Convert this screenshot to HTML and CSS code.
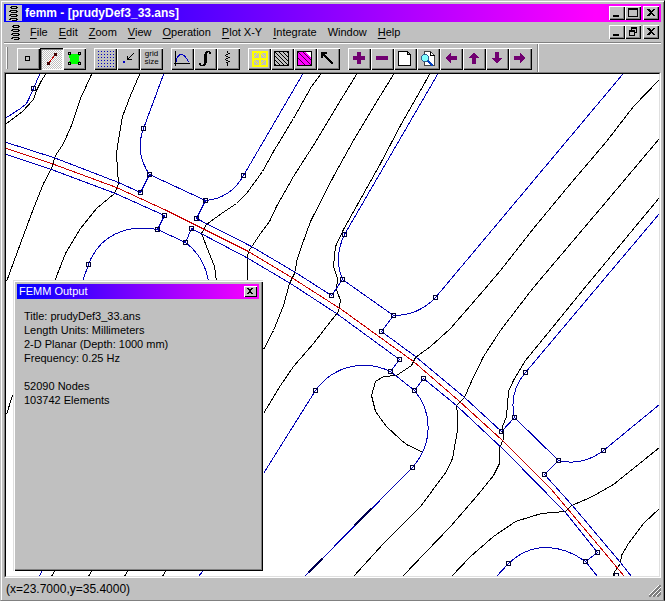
FILE: index.html
```html
<!DOCTYPE html>
<html lang="en">
<head>
    <meta charset="utf-8">
    <title>femm - [prudyDef3_33.ans]</title>
    <link rel="stylesheet" href="styles.css">
</head>

<body>
<svg class="defs" aria-hidden="true">
    <defs>
        <symbol id="coil" viewBox="0 0 12 16">
            <path d="M3 1h6v1H3zM2 2h2v1H2zM8 2h2v1H8zM3 3h6v1H3zM2 5h7v1H2zM1 6h2v1H1zM8 6h2v1H8zM3 7h6v1H3zM2 9h7v1H2zM1 10h2v1H1zM8 10h2v1H8zM3 11h6v1H3zM2 13h7v1H2zM1 14h2v1H1zM8 14h2v1H8zM4 15h5v1H4z"/>
        </symbol>
        <symbol id="min" viewBox="0 0 12 10"><path d="M2 7h6v2H2z"/></symbol>
        <symbol id="max" viewBox="0 0 12 10"><path d="M1 0h10v9H1zM2 2v6h8V2z" fill-rule="evenodd"/></symbol>
        <symbol id="restore" viewBox="0 0 12 10"><path d="M4 0h6v6H8v3H2V3h2zM5 2v1h3v2h1V2zM3 5v3h4V5z" fill-rule="evenodd"/></symbol>
        <symbol id="close" viewBox="0 0 12 10"><path d="M2 1h2l2 2 2-2h2L7 4.500l3 3.500H8L6 6 4 8H2l3-3.500z"/></symbol>
        <g id="node"><rect x="-2" y="-2" width="4" height="4"/></g>
        <pattern id="hatch" width="4" height="4" patternUnits="userSpaceOnUse">
            <path d="M0 0h1v1H0zM1 1h1v1H1zM2 2h1v1H2zM3 3h1v1H3z" fill="#000"/>
        </pattern>
        <pattern id="dots" x="4" y="3" width="3" height="3" patternUnits="userSpaceOnUse">
            <path d="M0 0h1v1H0z" fill="#0000c0"/>
        </pattern>
    </defs>
</svg>

<div class="window">
    <div class="titlebar">
        <span class="appIcon"><svg><use href="#coil"/></svg></span>
        <h1>femm - [prudyDef3_33.ans]</h1>
        <div class="winButtons">
            <button aria-label="Minimize"><svg><use href="#min"/></svg></button>
            <button aria-label="Maximize"><svg><use href="#max"/></svg></button>
            <button class="closeButton" aria-label="Close"><svg><use href="#close"/></svg></button>
        </div>
    </div>

    <div class="menubar">
        <svg class="docIcon"><use href="#coil"/></svg>
        <nav class="menu">
            <button><u>F</u>ile</button>
            <button><u>E</u>dit</button>
            <button><u>Z</u>oom</button>
            <button><u>V</u>iew</button>
            <button><u>O</u>peration</button>
            <button><u>P</u>lot X-Y</button>
            <button><u>I</u>ntegrate</button>
            <button>Window</button>
            <button><u>H</u>elp</button>
        </nav>
        <div class="winButtons">
            <button aria-label="Minimize document"><svg><use href="#min"/></svg></button>
            <button aria-label="Restore document"><svg><use href="#restore"/></svg></button>
            <button class="closeButton" aria-label="Close document"><svg><use href="#close"/></svg></button>
        </div>
    </div>

    <div class="toolbar">
        <div class="tools">
            <div class="toolGroup">
                <button aria-label="Point"><svg><rect x="8.500" y="8.500" width="4" height="4" fill="none" stroke="#000"/></svg></button>
                <button class="pressed" aria-label="Contour"><svg><path d="M9 15L15 7" stroke="#c00000" fill="none"/><path d="M7 14h3v3H7zM14 5h3v3h-3z" fill="#400000"/></svg></button>
                <button aria-label="Area">
                    <svg><path d="M6 7l2-1h6l3 1-1 3 1 5-3 1H8l-2-1 1-3z" fill="#00ff00"/><path d="M5.500 4.500h2v2h-2zM15.500 4.500h2v2h-2zM5.500 14.500h2v2h-2zM15.500 14.500h2v2h-2z" fill="none" stroke="#000"/></svg>
                </button>
            </div>
            <div class="toolGroup">
                <button aria-label="Show grid"><svg><rect x="4" y="3" width="16" height="16" fill="url(#dots)"/></svg></button>
                <button aria-label="Snap grid"><svg><path d="M16.500 5.500l-6 6M10.500 7.500v4h4" fill="none" stroke="#000"/><path d="M6 13h2v2H6z" fill="#0000c0"/></svg></button>
                <button class="gridSize">grid<br>size</button>
            </div>
            <div class="toolGroup">
                <button aria-label="Plot"><svg><path d="M4.500 3v15M3 15.500h16" fill="none" stroke="#000"/><path d="M5 14c1-6 3-7.500 5.500-7.500S15 9 17.500 14" fill="none" stroke="#0000c0"/></svg></button>
                <button aria-label="Line integral"><svg><path d="M12 3h4v1h1v2h-2V4h-1v1h-1v10h-1v2h-1v1H6v-1H5v-2h2v2h2v-1h1V6h1V4h1z"/></svg></button>
                <button aria-label="Circuit"><svg><path d="M10 3h1v2h-1zM11 5h2v1h-2zM9 6h2v1H9zM8 7h1v1H8zM9 8h2v1H9zM11 9h2v1h-2zM9 10h2v1H9zM8 11h1v1H8zM9 12h2v1H9zM11 13h2v1h-2zM9 14h2v1H9zM10 15h1v3h-1z"/></svg></button>
            </div>
            <div class="toolGroup">
                <button aria-label="Mesh"><svg><path d="M4.500 3.500h14v14h-14zM11.500 3v15M4 10.500h15" fill="none" stroke="#ffff00" stroke-width="2"/><path d="M6 9l4-4M13 5l4 4M6 12l4 4M17 12l-4 4" fill="none" stroke="#ffff00"/></svg></button>
                <button aria-label="Contours"><svg><rect x="3.500" y="3.500" width="14" height="14" fill="url(#hatch)" stroke="#000"/></svg></button>
                <button aria-label="Density"><svg><path d="M3.500 3.500h14v14h-14z" fill="#ff00ff" stroke="#000"/><path d="M12 4h5v6z" fill="#fff"/><path d="M4 4l13 13M9 4l8 8M4 10l7 7" fill="none" stroke="#400040"/></svg></button>
                <button aria-label="Vectors"><svg><path d="M16 16L6 6" stroke="#000" stroke-width="2"/><path d="M4 4h6v2H6v4H4z"/></svg></button>
            </div>
            <div class="toolGroup purple">
                <button aria-label="Zoom in"><svg><path d="M9 4h4v4h4v4h-4v4H9v-4H5V8h4z"/></svg></button>
                <button aria-label="Zoom out"><svg><path d="M5 8h12v4H5z"/></svg></button>
                <button aria-label="Natural size"><svg><path d="M4.500 3.500h9l3 3v11h-12zM13.500 3.500v3h3" fill="#fff" stroke="#000"/></svg></button>
                <button aria-label="Zoom window"><svg><path d="M7.500 3.500h6l4 4v10h-10z" fill="#fff" stroke="#404040"/><path d="M13.500 3.500v4h4" fill="none" stroke="#000"/><circle cx="8" cy="10" r="3.500" fill="#80ffff" stroke="#306090"/><path d="M11 13l5 5" stroke="#0040c0" stroke-width="2"/></svg></button>
                <button aria-label="Pan left"><svg><path d="M5 10l6-5v3h6v4h-6v3z"/></svg></button>
                <button aria-label="Pan up"><svg><path d="M11 4l5 6h-3v6H9v-6H6z"/></svg></button>
                <button aria-label="Pan down"><svg><path d="M11 16l5-6h-3V4H9v6H6z"/></svg></button>
                <button aria-label="Pan right"><svg><path d="M17 10l-6-5v3H5v4h6v3z"/></svg></button>
            </div>
        </div>
    </div>

    <div class="view">
        <svg class="plot" role="img" aria-label="Flux lines">
            <g transform="translate(-5.500 -73.500)">
                <!-- flux lines -->
                <g class="flux">
                    <path d="M45 74L41 80 36 90 33 99 22 111 6 123"/>
                    <path d="M91 74L80 98 71 125 63 143 55 155 51 168 43 183 33 208 20 243 6 281"/>
                    <path d="M139 74L130 95 122 116 119 133 116 153 117 170 118 183 114 193 96 208 80 228 65 253 54 281"/>
                    <path d="M320 74L311 86 293 118 273 151 262 171 246 193 236 203 221 213 206 224 201 233 208 251 214 266 216 281"/>
                    <path d="M356 74L343 95 316 140 293 176 276 206 269 221 260 233 248 251 247 256V281"/>
                    <path d="M393 74L380 95 353 140 333 176 310 221 301 246 296 261 295 271 289 283 283 305 273 330 263 349"/>
                    <path d="M429 74L400 125 380 163 343 229 335 246 333 266 337 278 336 289 340 300 338 311 330 321 313 343 293 366 280 385 263 413"/>
                    <path d="M659 79L633 106 606 141 566 188 533 228 500 270 483 290 450 328 430 346 415 357 411 365 396 375 383 376 375 381 371 395 375 411 386 426 400 439 406 444 423 452"/>
                    <path d="M659 138L600 208 533 287 516 309 500 330 483 356 470 383 464 397 456 405 457 413V430L452 458 446 471 420 506 383 543 353 576"/>
                    <path d="M659 197L582 290 543 338 525 360 513 380 508 391 506 416 502 426 503 438 499 448V463L493 475 476 496 450 526 402 576"/>
                    <path d="M659 447L613 484 590 497 571 505 565 511 541 513 515 521 493 536 470 556 451 576"/>
                    <path d="M659 508L643 523 628 543 621 555 620 563 613 573V576"/>
                    <path d="M12 395L6 414M54 571L51 576M91 571L88 576M127 571L124 576M165 571L162 576"/>
                </g>
                <!-- stator and rotor outlines -->
                <g class="outline">
                    <path d="M39 74L33 88 29 97 26 103 20 108 6 117"/>
                    <path d="M163 74L143 128Q134 152 149 174L140 192 118 182 53 157 6 142"/>
                    <path d="M149 174L205 200Q230 198 243 175L302 74"/>
                    <path d="M205 200L196 218 251 246 295 272 331 295 342 279Q333 257 344 234L437 74"/>
                    <path d="M342 279L393 315Q418 315 435 297L622 74"/>
                    <path d="M393 315L381 331 415 356 464 397 501 431 514 417Q508 392 525 372L594 290 659 213"/>
                    <path d="M514 417L558 460Q582 466 603 450L659 404"/>
                    <path d="M558 460L544 474 571 504 620 562 631 576"/>
                    <path d="M6 154L51 169 115 193 164 215 157 229C123 223 98 237 88 264L82 281"/>
                    <path d="M157 229L185 242Q204 256 208 281M185 242L191 228 246 257 290 283 336 313 399 359 390 371C365 359 334 364 315 390L263 473"/>
                    <path d="M390 371L414 390C431 410 434 441 412 467L304 576"/>
                    <path d="M414 390L423 378 456 405 504 450 565 512 597 552 585 561C560 543 531 541 508 563L496 576M585 561L597 576"/>
                    <path d="M41 571L39 576M202 571L198 576"/>
                </g>
                <path class="thick" d="M354 525L371 508M308 572L322 558"/>
                <path class="airgap" d="M6 148L51 163 116 187 166 210 220 237 248 251 291 277 341 309 413 361 458 400 502 440 550 488 593 539 624 576"/>
                <g class="nodes">
                    <use href="#node" x="33" y="88"/>
                    <use href="#node" x="143" y="128"/>
                    <use href="#node" x="149" y="174"/>
                    <use href="#node" x="140" y="192"/>
                    <use href="#node" x="205" y="200"/>
                    <use href="#node" x="196" y="218"/>
                    <use href="#node" x="243" y="175"/>
                    <use href="#node" x="164" y="215"/>
                    <use href="#node" x="157" y="229"/>
                    <use href="#node" x="185" y="242"/>
                    <use href="#node" x="191" y="228"/>
                    <use href="#node" x="88" y="264"/>
                    <use href="#node" x="344" y="234"/>
                    <use href="#node" x="342" y="279"/>
                    <use href="#node" x="331" y="295"/>
                    <use href="#node" x="435" y="297"/>
                    <use href="#node" x="393" y="315"/>
                    <use href="#node" x="381" y="331"/>
                    <use href="#node" x="399" y="359"/>
                    <use href="#node" x="390" y="371"/>
                    <use href="#node" x="423" y="378"/>
                    <use href="#node" x="414" y="390"/>
                    <use href="#node" x="315" y="390"/>
                    <use href="#node" x="412" y="467"/>
                    <use href="#node" x="525" y="372"/>
                    <use href="#node" x="514" y="417"/>
                    <use href="#node" x="501" y="431"/>
                    <use href="#node" x="558" y="460"/>
                    <use href="#node" x="544" y="474"/>
                    <use href="#node" x="603" y="450"/>
                    <use href="#node" x="597" y="552"/>
                    <use href="#node" x="585" y="561"/>
                    <use href="#node" x="508" y="563"/>
                    <use href="#node" x="616" y="575"/>
                </g>
            </g>
        </svg>

        <section class="output">
            <div class="outputTitle">
                <h2>FEMM Output</h2>
                <button aria-label="Close output"><svg><use href="#close"/></svg></button>
            </div>
            <div class="outputText">
                <p>Title: prudyDef3_33.ans<br>
                Length Units: Millimeters<br>
                2-D Planar (Depth: 1000 mm)<br>
                Frequency: 0.25 Hz</p>
                <p>52090 Nodes<br>
                103742 Elements</p>
            </div>
        </section>
    </div>

    <div class="statusbar">
        <span>(x=23.7000,y=35.4000)</span>
        <svg class="grip"><path d="M0 12L12 0M4 12l8-8M8 12l4-4" stroke="#808080" stroke-width="2"/><path d="M-1 11L11-1M3 11l9-9M7 11l5-5" stroke="#fff"/></svg>
    </div>
</div>
</body>
</html>
```
FILE: styles.css
```css
*{
    box-sizing: border-box;
}

body{
    margin: 0;
    background-color: #c0c0c0;
    font-family: "Liberation Sans", Arial, sans-serif;
    font-size: 11px;
    color: #000;
}

h1, h2, p{
    margin: 0;
}

button{
    padding: 0;
    border: none;
    background-color: #c0c0c0;
    font-family: inherit;
    font-size: 11px;
    color: #000;
}

svg{
    display: block;
    shape-rendering: crispEdges;
}

.defs{
    position: absolute;
    width: 0;
    height: 0;
}

.window{
    display: flex;
    flex-direction: column;
    height: 100vh;
    padding: 3px 3px 0;
    border-left: 1px solid #c0c0c0;
    border-top: 1px solid #c0c0c0;
    border-right: 1px solid #000;
    border-bottom: 1px solid #808080;
    box-shadow: inset 1px 1px #fff, inset -1px 0 #808080;
}

/* title and menu rows */
.titlebar{
    display: flex;
    align-items: center;
    height: 18px;
    padding: 0 2px;
    background: linear-gradient(to right, #0000ff, #ff00ff 90%);
}

.titlebar h1{
    flex: 1;
    padding-left: 3px;
    font-size: 12px;
    line-height: 18px;
    color: #fff;
}

.appIcon{
    width: 16px;
    height: 16px;
    padding: 0 2px;
    background-color: #c0c0c0;
}

.appIcon svg, .docIcon{
    width: 12px;
    height: 16px;
}

.winButtons{
    display: flex;
}

.winButtons button{
    width: 16px;
    height: 14px;
    padding: 2px;
    box-shadow: inset 1px 1px #fff, inset -1px -1px #000, inset -2px -2px #808080;
}

.winButtons svg{
    width: 12px;
    height: 10px;
}

.winButtons .closeButton{
    margin-left: 2px;
}

.menubar{
    display: flex;
    align-items: center;
    height: 20px;
    padding: 0 2px 0 6px;
}

.menu{
    display: flex;
    flex: 1;
    gap: 11px;
    padding-left: 8px;
}

.menu button{
    line-height: 20px;
}

.menu u{
    text-underline-offset: 2px;
}

/* toolbar */
.toolbar{
    display: flex;
    height: 30px;
    border-top: 1px solid #808080;
    box-shadow: inset 0 1px #fff;
}

.tools{
    display: flex;
    gap: 8px;
    padding: 4px 5px 3px 11px;
    margin: 1px 0 0 2px;
    border-right: 1px solid #808080;
    box-shadow: 1px 0 #fff;
    background: linear-gradient(#fff, #fff) 0 3px / 1px 22px no-repeat,
                linear-gradient(#808080, #808080) 1px 3px / 1px 22px no-repeat;
}

.toolGroup{
    display: flex;
}

.toolGroup button{
    width: 23px;
    height: 22px;
    box-shadow: inset 1px 1px #fff, inset -1px -1px #000, inset -2px -2px #808080;
}

.toolGroup svg{
    width: 23px;
    height: 22px;
}

.toolGroup .pressed{
    background: repeating-conic-gradient(#fff 0 25%, #c0c0c0 0 50%) 0 0 / 2px 2px;
    box-shadow: inset 1px 1px #000, inset 2px 2px #808080, inset -1px -1px #fff;
}

.toolGroup .gridSize{
    padding-bottom: 3px;
    font-size: 8px;
    line-height: 8px;
}

.purple{
    fill: #700070;
}

/* drawing area */
.view{
    position: relative;
    flex: 1;
    min-height: 0;
    border: 1px solid #808080;
    border-right-color: #fff;
    border-bottom-color: #fff;
    background-color: #fff;
}

.plot{
    width: 100%;
    height: 100%;
    border: 1px solid #000;
    border-right-color: #dfdfdf;
    border-bottom-color: #dfdfdf;
}

.plot path, .plot use{
    fill: none;
    stroke-width: 1px;
}

.flux{
    stroke: #000;
}

.outline{
    stroke: #0000b4;
}

.plot .thick{
    stroke: #000050;
    stroke-width: 2px;
}

.airgap{
    stroke: #c80000;
}

.nodes{
    stroke: #000030;
}

/* output window floats over the drawing */
.output{
    position: absolute;
    left: 8px;
    top: 207px;
    width: 250px;
    height: 291px;
    padding: 4px;
    background-color: #c0c0c0;
    box-shadow: inset 1px 1px #dfdfdf, inset 2px 2px #fff, inset -1px -1px #000, inset -2px -2px #808080;
}

.outputTitle{
    display: flex;
    align-items: center;
    justify-content: space-between;
    height: 15px;
    padding: 0 2px;
    background: linear-gradient(to right, #0000ff, #ff00ff);
}

.outputTitle h2{
    font-size: 11px;
    font-weight: normal;
    line-height: 15px;
    color: #fff;
}

.outputTitle button{
    width: 13px;
    height: 11px;
    padding: 1px;
    box-shadow: inset 1px 1px #fff, inset -1px -1px #000;
}

.outputTitle svg{
    width: 10px;
    height: 9px;
}

.outputText{
    padding: 10px 7px;
    line-height: 14px;
}

.outputText p{
    margin-bottom: 14px;
}

.statusbar{
    display: flex;
    align-items: center;
    justify-content: space-between;
    height: 22px;
    padding-left: 2px;
    font-size: 12px;
}

.grip{
    align-self: flex-end;
    width: 12px;
    height: 12px;
    margin-bottom: 3px;
}
```
